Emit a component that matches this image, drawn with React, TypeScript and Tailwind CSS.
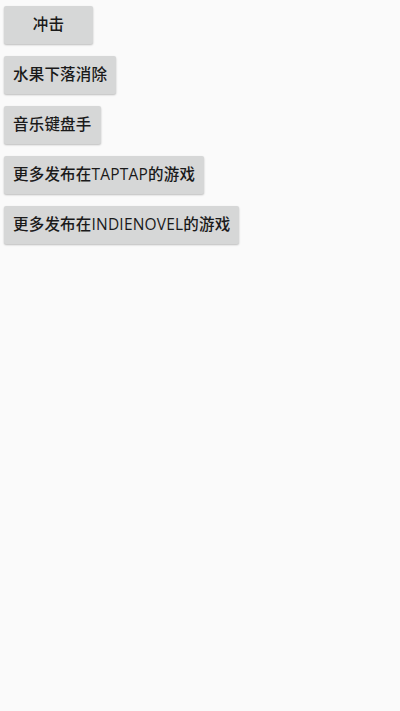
const items = ["冲击", "水果下落消除", "音乐键盘手", "更多发布在TAPTAP的游戏", "更多发布在INDIENOVEL的游戏"];

export default function App() {
  return (
    <div
      className="min-h-[711px] w-[400px] bg-[#fafafa] px-1 pt-[6px] flex flex-col items-start gap-3"
      style={{ fontFamily: '"Open Sans", "Noto Sans CJK SC", sans-serif' }}
    >
      {items.map((label) => (
        <button
          key={label}
          className="h-[38px] min-w-[89px] px-[9px] rounded-[2px] bg-[#d6d7d7] text-[15.5px] font-medium tracking-[0.2px] text-[#1a1a1a] shadow-[0_1px_2px_rgba(0,0,0,0.25)] flex items-center justify-center"
        >
          {label}
        </button>
      ))}
    </div>
  );
}
